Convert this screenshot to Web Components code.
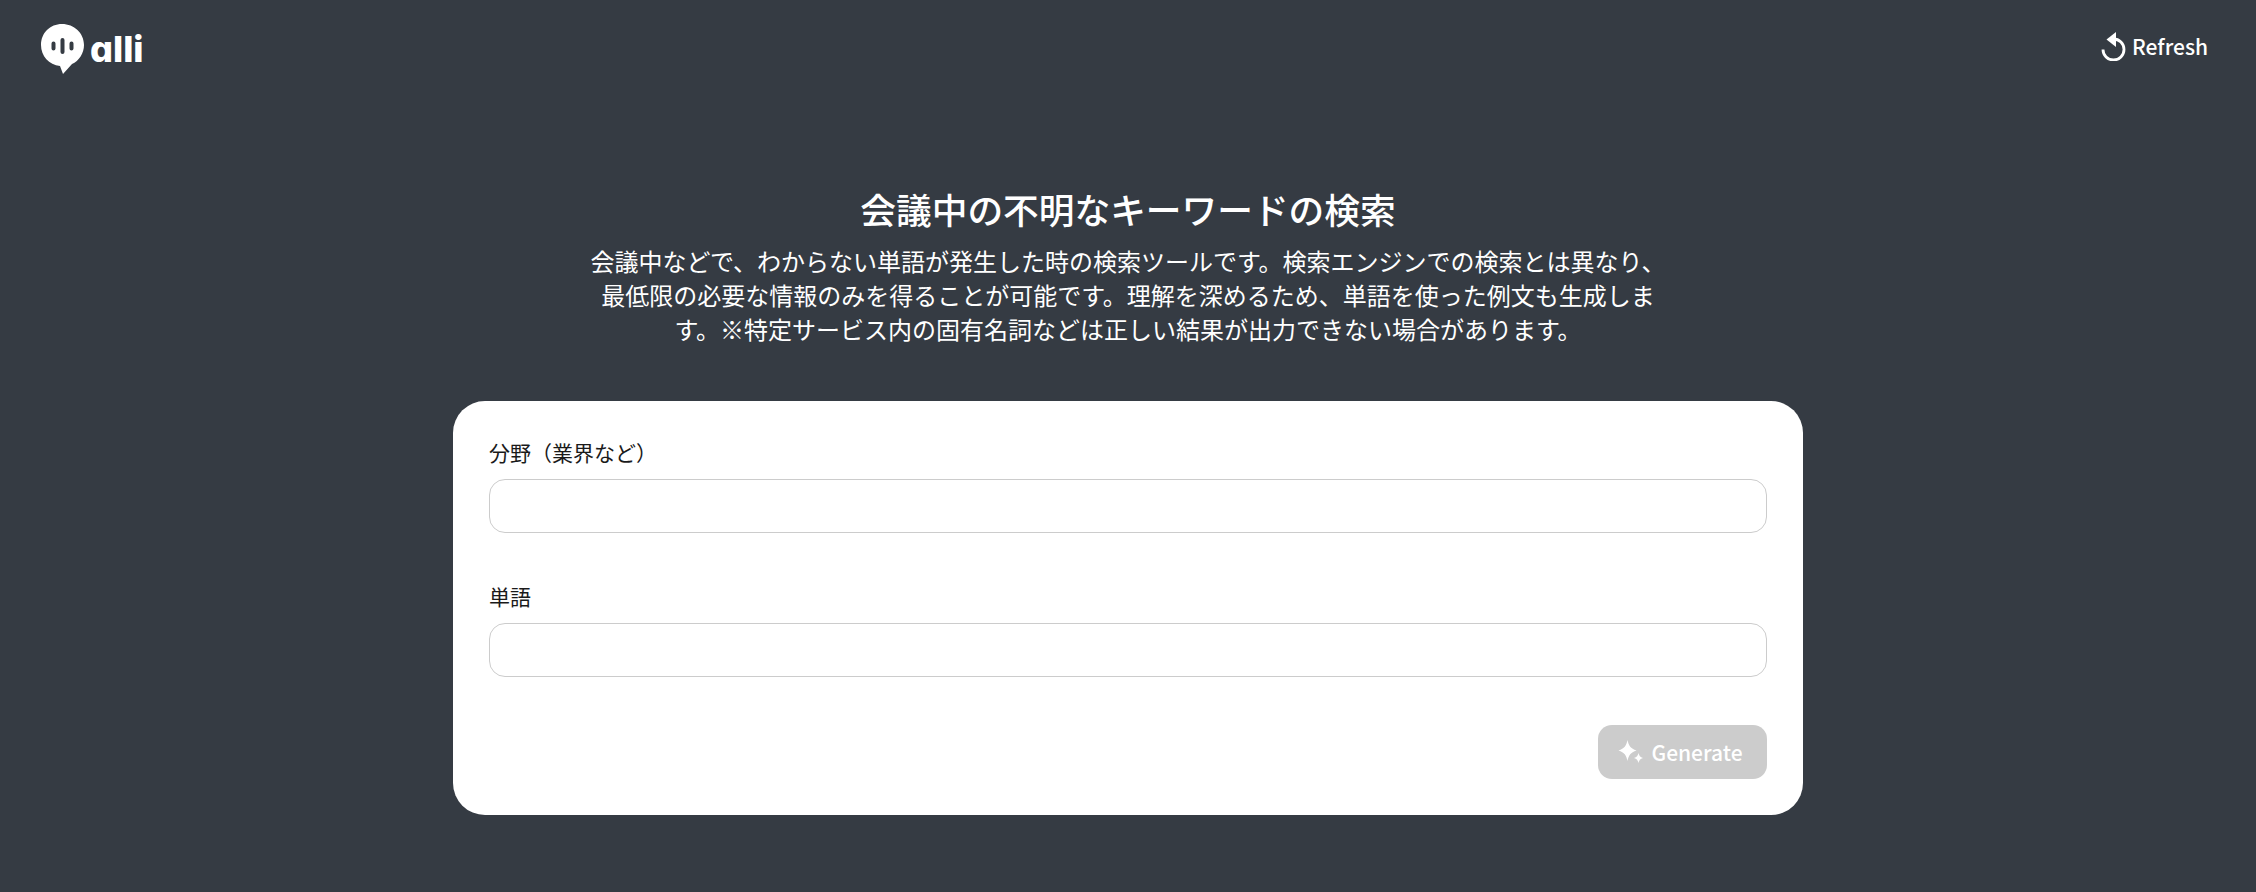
<!DOCTYPE html>
<html lang="ja">
<head>
<meta charset="utf-8">
<title>alli</title>
<style>
  html, body { margin: 0; padding: 0; background: #353b43; }
  body { font-family: "Noto Sans CJK JP", "Noto Sans", sans-serif; }
</style>
</head>
<body>
<app-shell>
  <app-header slot="header"></app-header>
  <intro-text slot="intro" heading="会議中の不明なキーワードの検索">会議中などで、わからない単語が発生した時の検索ツールです。検索エンジンでの検索とは異なり、最低限の必要な情報のみを得ることが可能です。理解を深めるため、単語を使った例文も生成します。※特定サービス内の固有名詞などは正しい結果が出力できない場合があります。</intro-text>
  <form-card slot="card">
    <text-field label="分野（業界など）"></text-field>
    <text-field label="単語"></text-field>
    <generate-button slot="actions"></generate-button>
  </form-card>
</app-shell>
<script>
const shellTemplate = document.createElement('template');
shellTemplate.innerHTML = `
  <style>
    :host { display: block; height: 892px; overflow: hidden; background: #353b43; color: #fff; }
    main { display: flex; flex-direction: column; align-items: center; padding-top: 86px; }
  </style>
  <slot name="header"></slot>
  <main>
    <slot name="intro"></slot>
    <slot name="card"></slot>
  </main>
`;
class AppShell extends HTMLElement {
  constructor() {
    super();
    this.attachShadow({mode: 'open'});
    this.shadowRoot.appendChild(shellTemplate.content.cloneNode(true));
  }
}

const headerTemplate = document.createElement('template');
headerTemplate.innerHTML = `
  <style>
    :host { display: flex; justify-content: space-between; align-items: center; height: 96px; padding: 0 48px 0 39px; box-sizing: border-box; }
    .logo { display: flex; align-items: center; gap: 5px; }
    .logo svg { margin-top: 2px; }
    .word { font-family: "Inter", sans-serif; font-feature-settings: "cv11"; font-size: 36px; line-height: 52px; font-weight: 800; color: #fff; position: relative; top: 1px; }
    button { all: unset; display: flex; align-items: center; gap: 6px; font-size: 21px; font-weight: 500; color: #fff; position: relative; top: -2px; }
    svg { display: block; }
  </style>
  <div class="logo">
    <svg width="46" height="52" viewBox="0 0 46 52">
      <path fill="#fff" d="M23 1C11 1 2 10 2 22c0 11 8 20 19 21l3 8 9-10c7-3 12-11 12-19C45 10 35 1 23 1z"/>
      <g stroke="#353b43" stroke-width="4" stroke-linecap="round" fill="none">
        <path d="M14.500 20.500v5M23.500 17v12M32.500 20.500v5"/>
      </g>
    </svg>
    <span class="word">alli</span>
  </div>
  <button type="button">
    <svg width="26" height="30" viewBox="0 0 26 30" fill="none" stroke="#fff" stroke-width="2.800">
      <path d="M15 8h-1.500a10.500 10.500 0 1 1-10.500 10.500"/>
      <path d="M16 1v15L6.500 8.500z" fill="#fff" stroke="none"/>
    </svg>
    <span>Refresh</span>
  </button>
`;
class AppHeader extends HTMLElement {
  constructor() {
    super();
    this.attachShadow({mode: 'open'});
    this.shadowRoot.appendChild(headerTemplate.content.cloneNode(true));
  }
}

const introTemplate = document.createElement('template');
introTemplate.innerHTML = `
  <style>
    :host { display: block; width: 1088px; text-align: center; margin-bottom: 55px; }
    h1 { margin: 0 0 8px; font-size: 35.700px; line-height: 54px; font-weight: 500; }
    p { margin: 0; font-size: 24px; line-height: 34px; font-weight: 400; }
  </style>
  <h1></h1>
  <p><slot></slot></p>
`;
class IntroText extends HTMLElement {
  constructor() {
    super();
    this.attachShadow({mode: 'open'});
    this.shadowRoot.appendChild(introTemplate.content.cloneNode(true));
    this.shadowRoot.querySelector('h1').textContent = this.getAttribute('heading');
  }
}

const cardTemplate = document.createElement('template');
cardTemplate.innerHTML = `
  <style>
    :host { display: flex; flex-direction: column; width: 1350px; box-sizing: border-box; padding: 32px 36px 36px; background: #fff; border-radius: 32px; color: #1a1a1a; }
    .fields { display: flex; flex-direction: column; gap: 44px; }
    .actions { display: flex; justify-content: flex-end; margin-top: 48px; }
  </style>
  <div class="fields"><slot></slot></div>
  <div class="actions"><slot name="actions"></slot></div>
`;
class FormCard extends HTMLElement {
  constructor() {
    super();
    this.attachShadow({mode: 'open'});
    this.shadowRoot.appendChild(cardTemplate.content.cloneNode(true));
  }
}

const fieldTemplate = document.createElement('template');
fieldTemplate.innerHTML = `
  <style>
    :host { display: block; }
    label { display: block; font-size: 21px; line-height: 32px; padding-top: 3px; margin-bottom: 11px; }
    input { display: block; width: 100%; height: 54px; box-sizing: border-box; border: 1px solid #ccc; border-radius: 16px; background: #fff; padding: 0 16px; font: inherit; outline: none; }
  </style>
  <label for="f"></label>
  <input id="f" type="text">
`;
class TextField extends HTMLElement {
  constructor() {
    super();
    this.attachShadow({mode: 'open'});
    this.shadowRoot.appendChild(fieldTemplate.content.cloneNode(true));
    this.shadowRoot.querySelector('label').textContent = this.getAttribute('label');
  }
}

const buttonTemplate = document.createElement('template');
buttonTemplate.innerHTML = `
  <style>
    :host { display: block; }
    button { all: unset; box-sizing: border-box; display: flex; align-items: center; justify-content: center; gap: 7px; width: 169px; height: 54px; padding-right: 4px; background: #ccc; color: #fff; border-radius: 14px; font-size: 21px; font-weight: 500; }
    svg { display: block; }
  </style>
  <button type="button" disabled>
    <svg width="26" height="24" viewBox="0 0 26 24" fill="#fff">
      <path d="M9.500 0c1.200 5.800 3 8.400 9 10.500-6 2.100-7.800 4.700-9 10.500-1.200-5.800-3-8.400-9-10.500 6-2.100 7.800-4.700 9-10.500z"/>
      <path d="M20.500 13c.6 2.900 1.700 4 4.500 5-2.800 1-3.900 2.100-4.500 5-.6-2.900-1.700-4-4.500-5 2.800-1 3.900-2.100 4.500-5z"/>
    </svg>
    <span>Generate</span>
  </button>
`;
class GenerateButton extends HTMLElement {
  constructor() {
    super();
    this.attachShadow({mode: 'open'});
    this.shadowRoot.appendChild(buttonTemplate.content.cloneNode(true));
  }
}

customElements.define('app-shell', AppShell);
customElements.define('app-header', AppHeader);
customElements.define('intro-text', IntroText);
customElements.define('form-card', FormCard);
customElements.define('text-field', TextField);
customElements.define('generate-button', GenerateButton);
</script>
</body>
</html>
